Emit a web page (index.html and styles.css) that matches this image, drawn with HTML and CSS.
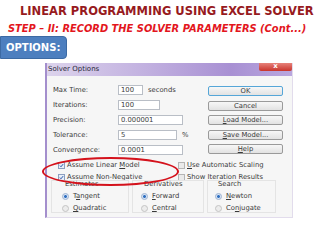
FILE: index.html
```html
<!DOCTYPE html>
<html lang="en">
<head>
    <meta charset="UTF-8">
    <meta name="viewport" content="width=device-width, initial-scale=1.0">
    <title> Solver Options </title>
    <link rel="stylesheet" href="styles.css">
</head>
<body>

    <h1 class="mainTitle">LINEAR PROGRAMMING USING EXCEL SOLVER</h1>
    <h2 class="stepTitle">STEP – II: RECORD THE SOLVER PARAMETERS (Cont...)</h2>
    <div class="optionsTag">OPTIONS:</div>

    <div class="dialog">
        <div class="titleBar">
            <span class="titleText">Solver Options</span>
            <span class="closeBtn">x</span>
        </div>

        <div class="dialogBody">
            <div class="topArea">
                <div class="fields">
                    <div class="field">
                        <span class="label">Max Time:</span>
                        <span class="input short">100</span>
                        <span class="unit">seconds</span>
                    </div>
                    <div class="field">
                        <span class="label">Iterations:</span>
                        <span class="input mid">100</span>
                    </div>
                    <div class="field">
                        <span class="label">Precision:</span>
                        <span class="input long">0.000001</span>
                    </div>
                    <div class="field">
                        <span class="label">Tolerance:</span>
                        <span class="input tol">5</span>
                        <span class="unit">%</span>
                    </div>
                    <div class="field">
                        <span class="label">Convergence:</span>
                        <span class="input long">0.0001</span>
                    </div>
                </div>

                <div class="buttons">
                    <span class="btn okBtn">OK</span>
                    <span class="btn">Cancel</span>
                    <span class="btn"><u>L</u>oad Model...</span>
                    <span class="btn"><u>S</u>ave Model...</span>
                    <span class="btn"><u>H</u>elp</span>
                </div>
            </div>

            <div class="checks">
                <div class="check"><span class="box on"><svg viewBox="0 0 8 8"><path d="M1.5 4.2 L3.2 6 L6.6 1.8" /></svg></span><span>Assume Linear <u>M</u>odel</span></div>
                <div class="check"><span class="box"></span><span><u>U</u>se Automatic Scaling</span></div>
                <div class="check"><span class="box on"><svg viewBox="0 0 8 8"><path d="M1.5 4.2 L3.2 6 L6.6 1.8" /></svg></span><span>Assume Non-<u>N</u>egative</span></div>
                <div class="check"><span class="box"></span><span>Show Iteration <u>R</u>esults</span></div>
            </div>

            <div class="groups">
                <div class="group est">
                    <span class="groupLabel">Estimates</span>
                    <div class="radio"><span class="dot on"></span><span>T<u>a</u>ngent</span></div>
                    <div class="radio"><span class="dot"></span><span><u>Q</u>uadratic</span></div>
                </div>
                <div class="group der">
                    <span class="groupLabel">Derivatives</span>
                    <div class="radio"><span class="dot on"></span><span><u>F</u>orward</span></div>
                    <div class="radio"><span class="dot"></span><span><u>C</u>entral</span></div>
                </div>
                <div class="group sea">
                    <span class="groupLabel">Search</span>
                    <div class="radio"><span class="dot on"></span><span><u>N</u>ewton</span></div>
                    <div class="radio"><span class="dot"></span><span>Co<u>n</u>jugate</span></div>
                </div>
            </div>
        </div>

        <div class="ellipse"></div>
    </div>

</body>
</html>
```

FILE: styles.css
```css
* {
    margin: 0;
    padding: 0;
    box-sizing: border-box;
}

body {
    width: 320px;
    height: 240px;
    background-color: white;
    font-family: "DejaVu Sans", sans-serif;
    overflow: hidden;
}

.mainTitle {
    margin-top: 4px;
    margin-left: 20px;
    font-size: 11.5px;
    line-height: 14px;
    color: #971a1e;
    white-space: nowrap;
}

.stepTitle {
    margin-top: 5px;
    margin-left: 8px;
    font-size: 9.9px;
    line-height: 12px;
    font-style: italic;
    color: #e3161d;
    white-space: nowrap;
}

.optionsTag {
    margin-top: 1px;
    width: 67px;
    height: 23px;
    padding-left: 5px;
    line-height: 22px;
    font-size: 10px;
    font-weight: bold;
    color: white;
    background-color: #4d7fbf;
    border: 1px solid #3c6aa3;
    border-radius: 0 4px 4px 0;
}

.dialog {
    position: relative;
    margin-top: 4px;
    margin-left: 45px;
    width: 248px;
    height: 155px;
    border-left: 2px solid #a48fcd;
    border-right: 1px solid #e2dcec;
    border-bottom: 1px solid #e2dcec;
    background-color: #f6f6f6;
    font-size: 6.8px;
    color: #3a3a3a;
}

.titleBar {
    height: 13px;
    display: flex;
    align-items: flex-start;
    background-image: linear-gradient(to right, #dcd3ec, #c2b1e0 40%, #a890d3 75%, #b9a7df);
}

.titleText {
    padding-left: 1px;
    line-height: 13px;
    font-size: 7px;
    color: #2a2a3a;
}

.closeBtn {
    margin-left: auto;
    width: 33px;
    height: 8px;
    line-height: 7px;
    text-align: center;
    font-size: 7px;
    font-weight: bold;
    color: white;
    background-image: linear-gradient(to bottom, #e7827a, #c9342c);
    border-radius: 0 0 2px 2px;
}

.dialogBody {
    padding: 9px 9px 0 6px;
}

.topArea {
    display: grid;
    grid-template-columns: 1fr 75px;
}

.fields {
    display: flex;
    flex-direction: column;
    gap: 5px;
}

.field {
    display: flex;
    align-items: center;
    height: 10px;
}

.label {
    width: 65px;
}

.input {
    height: 10px;
    line-height: 9px;
    padding-left: 2px;
    background-color: white;
    border: 1px solid #b9bec6;
}

.short { width: 25px; }
.mid { width: 42px; }
.long { width: 65px; }
.tol { width: 59px; }

.unit {
    margin-left: 5px;
}

.buttons {
    display: flex;
    flex-direction: column;
    gap: 4.5px;
    padding-top: 1px;
}

.btn {
    height: 10px;
    line-height: 8px;
    text-align: center;
    background-image: linear-gradient(to bottom, #f7f7f7, #e2e2e2);
    border: 1px solid #9a9a9a;
    border-radius: 2px;
}

.okBtn {
    border-color: #55a6d8;
}

.checks {
    margin-top: 6px;
    display: grid;
    grid-template-columns: 120px 1fr;
    row-gap: 4px;
    padding-left: 5px;
}

.check {
    display: flex;
    align-items: center;
    height: 8px;
    white-space: nowrap;
}

.box {
    width: 7px;
    height: 7px;
    margin-right: 2px;
    background-color: #eaeaea;
    border: 1px solid #b5b5b5;
}

.box.on {
    background-color: #e8eef8;
    border-color: #8c9fc0;
}

.box svg {
    display: block;
    width: 100%;
    height: 100%;
    fill: none;
    stroke: #2857a8;
    stroke-width: 1.6;
}

.groups {
    margin-top: -1px;
    margin-left: -2px;
    display: grid;
    grid-template-columns: 78px 72px 69px;
    column-gap: 3px;
}

.group {
    height: 33px;
    padding-top: 6px;
    border: 1px solid #e4e4e4;
    display: flex;
    flex-direction: column;
    gap: 4px;
}

.groupLabel {
    margin-top: -7px;
    margin-left: 3px;
    height: 8px;
    line-height: 8px;
}

.est { padding-left: 10px; }
.der { padding-left: 8px; }
.sea { padding-left: 7px; }

.radio {
    display: flex;
    align-items: center;
    height: 8px;
}

.dot {
    width: 7px;
    height: 7px;
    margin-right: 4px;
    border-radius: 50%;
    background-color: #ececec;
    border: 1px solid #c4c4c4;
}

.dot.on {
    background-image: radial-gradient(circle, #2f6fc0 0, #2f6fc0 35%, #d7e3f3 45%);
    border-color: #9fb4d2;
}

.ellipse {
    position: absolute;
    left: -5px;
    top: 94px;
    width: 137px;
    height: 29px;
    border: 2px solid #d4121c;
    border-radius: 50%;
}
```
